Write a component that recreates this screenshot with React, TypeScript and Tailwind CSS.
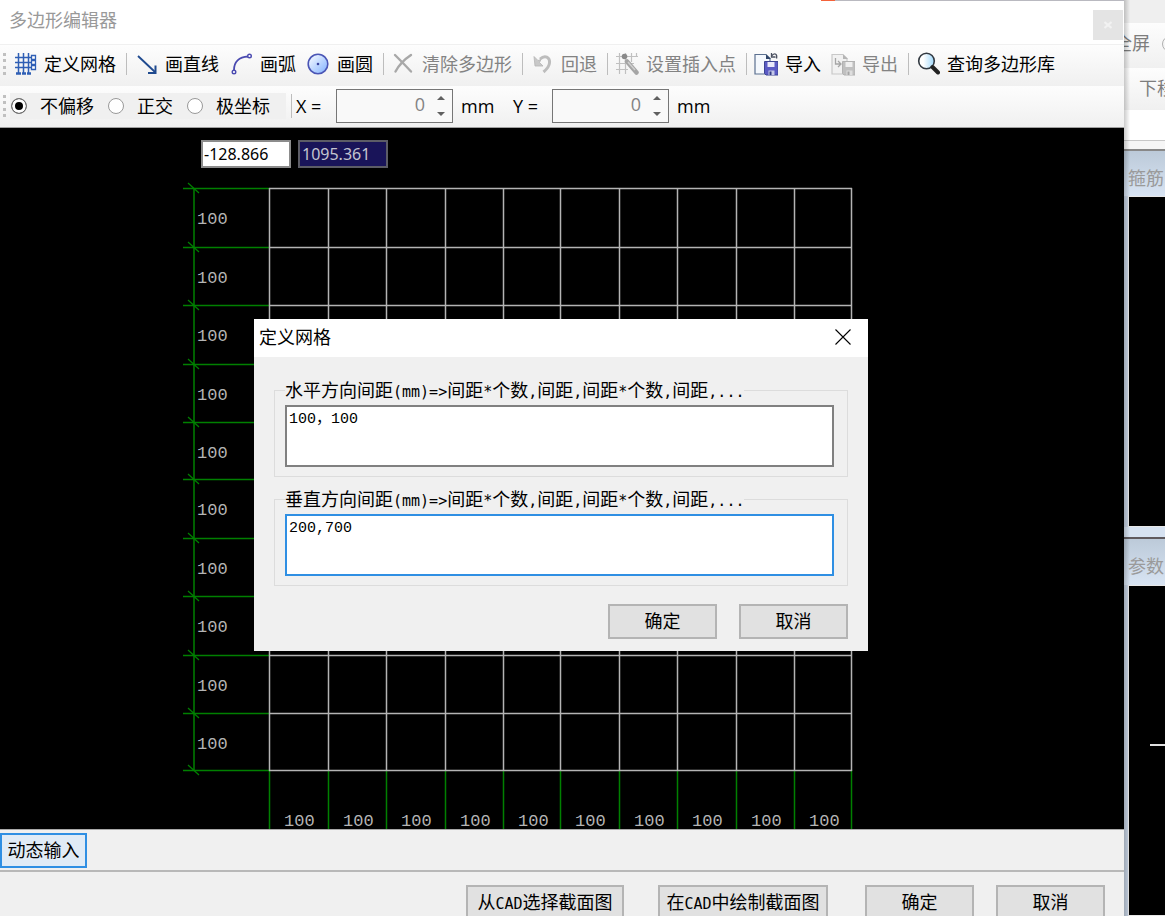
import { useState } from 'react';
import type { ReactNode } from 'react';

const GRID_LEFT = 269;
const GRID_TOP = 60;

/* Distance of every grid line from the grid's corner */
const lines = [0, 59, 117, 176, 234, 291, 350, 408, 467, 525, 582];
const GRID_SIZE = lines[lines.length - 1];

/* Half-width characters sit in 9px cells next to the 18px CJK ones */
const Mixed = ({ text }: { text: string }) => (
  <>
    {text.split(/([\x20-\x7e]+)/).map((part, i) =>
      i % 2 ? (
        <span key={i} className="font-['DejaVu_Sans_Mono',monospace] text-[15px] leading-none">{part}</span>
      ) : (
        part
      )
    )}
  </>
);

/* Icons */
const GridIcon = () => (
  <svg className="w-6 h-6" viewBox="0 0 24 24" fill="none" stroke="#2f5fb5" strokeWidth="1.5">
    <path d="M5.5 1v20M10.5 1v20M15.5 1v20M2 5.5h16M2 10.5h16M2 15.5h16" />
    <path d="M18.5 3.5h4v4h-4zM18.5 8.5h4v4h-4zM18.5 13.5h4v4h-4z" fill="#fff" strokeWidth="1.3" />
    <path d="M3 21.5h5M9 21.5h4M14 21.5h4" strokeWidth="2.6" />
  </svg>
);

const LineIcon = () => (
  <svg className="w-6 h-6" viewBox="0 0 24 24" fill="none" stroke="#1f4a8f">
    <path d="M4 4L21 20" strokeWidth="1.8" />
    <path d="M14 21H21.5V13.5" strokeWidth="2" />
  </svg>
);

const ArcIcon = () => (
  <svg className="w-6 h-6" viewBox="0 0 24 24" fill="none" stroke="#4a4ab0" strokeWidth="1.8">
    <path d="M5 18C5 10 10 5 19 4.5" />
    <circle cx="5" cy="20" r="1.8" fill="#fff" strokeWidth="1.4" />
    <circle cx="20.5" cy="4" r="1.8" fill="#fff" strokeWidth="1.4" />
  </svg>
);

const CircleIcon = () => (
  <svg className="w-6 h-6" viewBox="0 0 24 24">
    <defs>
      <linearGradient id="disc" x1="0" y1="0" x2="1" y2="1">
        <stop offset="0" stopColor="#ffffff" />
        <stop offset="1" stopColor="#7fb0ff" />
      </linearGradient>
    </defs>
    <circle cx="12" cy="12" r="9.8" fill="url(#disc)" stroke="#4a55b5" strokeWidth="1.6" />
    <circle cx="12" cy="12" r="1.3" fill="#3a45a0" />
  </svg>
);

const ClearIcon = () => (
  <svg className="w-6 h-6" viewBox="0 0 24 24" fill="none" stroke="#a8a8a8" strokeLinecap="round">
    <path d="M4 3C9 8 14 13 20 19.5" strokeWidth="2.4" />
    <path d="M20 3C14 7 8 13 4.5 19.5" strokeWidth="2.4" />
  </svg>
);

const UndoIcon = () => (
  <svg className="w-6 h-6" viewBox="0 0 24 24" fill="none" stroke="#bdbdbd">
    <path d="M10 7C15 2.5 20 5 19.5 11C19.2 15 17 17 13.5 20" strokeWidth="3" />
    <path d="M4 4.5L5 14H13L9.5 10.5L11 7.5L8 8.5z" fill="#c8c8c8" stroke="#b5b5b5" strokeWidth="0.8" />
  </svg>
);

const InsertPointIcon = () => (
  <svg className="w-6 h-6" viewBox="0 0 24 24" fill="none">
    <path d="M4.5 1v21M10.5 1v21M16.5 1v9M21.5 1v4M1 4.5h22M1 11.5h18M1 17.5h12" stroke="#c0c0c0" strokeWidth="1.2" />
    <circle cx="9.5" cy="4.5" r="2.8" fill="#8a8a8a" />
    <path d="M12 9.5L21.5 20.5" stroke="#a5a5a5" strokeWidth="4.5" strokeLinecap="round" />
    <path d="M13 10L20 18" stroke="#d0d0d0" strokeWidth="1.5" />
  </svg>
);

const ImportIcon = () => (
  <svg className="w-6 h-6" viewBox="0 0 24 24" fill="none">
    <path d="M1 2.5h11l4 4V22H1z" fill="#f4f8fd" stroke="#5b7090" strokeWidth="1.2" />
    <path d="M12 2.5v4.5h5z" fill="#2f4468" />
    <path d="M10.5 9.5H24V23H12l-1.5-1.5z" fill="#5a5ac4" stroke="#3c4494" />
    <path d="M13.5 10h7v5h-7z" fill="#e8e8fa" />
    <path d="M14.5 18.5h6V23h-6z" fill="#c4c8e8" />
    <path d="M15.5 19.5h2V23h-2z" fill="#333c85" />
    <path d="M18 3.5C21 0.5 23.5 2 22.5 6.5M17.5 1v4h4" stroke="#4a5060" strokeWidth="1.3" />
  </svg>
);

const ExportIcon = () => (
  <svg className="w-6 h-6" viewBox="0 0 24 24" fill="none">
    <path d="M1 2.5h11l4 4V22H1z" fill="#f1f1f1" stroke="#c8c8c8" strokeWidth="1.2" />
    <path d="M12 2.5v4.5h5z" fill="#b5b5b5" />
    <path d="M11.5 9.5H24V23H13l-1.5-1.5z" fill="#c0c0c0" stroke="#b2b2b2" />
    <path d="M14.5 10h7v5h-7z" fill="#efefef" />
    <path d="M15.5 18.5h6V23h-6z" fill="#dedede" />
    <path d="M16.5 19.5h2V23h-2z" fill="#a5a5a5" />
    <path d="M4.5 6v6h5M7 9l3 3-3 3" stroke="#a5a5a5" strokeWidth="1.3" />
  </svg>
);

const SearchIcon = () => (
  <svg className="w-6 h-6" viewBox="0 0 24 24" fill="none">
    <defs>
      <linearGradient id="lens" x1="0" y1="0" x2="1" y2="0">
        <stop offset="0.3" stopColor="#ffffff" />
        <stop offset="1" stopColor="#9fd8fb" />
      </linearGradient>
    </defs>
    <circle cx="10.5" cy="9" r="7.8" fill="url(#lens)" stroke="#333a42" strokeWidth="1.6" />
    <path d="M16.5 15L22 20.5" stroke="#222" strokeWidth="4" strokeLinecap="round" />
  </svg>
);

const Grip = () => (
  <div className="w-[3px] h-[22px] flex flex-col justify-between shrink-0" aria-hidden="true">
    {[0, 1, 2, 3].map((i) => (
      <span key={i} className="w-[3px] h-[3px] bg-[#c0c0c0]" />
    ))}
  </div>
);

const Separator = () => <div className="w-px h-[22px] bg-[#bdbdbd] mr-[7px] shrink-0" />;

type ToolProps = { icon: ReactNode; label: string; disabled?: boolean };

const Tool = ({ icon, label, disabled }: ToolProps) => (
  <button type="button" disabled={disabled} className="flex items-center gap-[7px] mr-[10px] shrink-0 whitespace-nowrap text-black disabled:text-[#838383]">
    {icon}
    <span>{label}</span>
  </button>
);

const NumberField = ({ id }: { id: string }) => {
  const [value, setValue] = useState(0);
  return (
    <div className="flex w-[117px] h-[34px] border border-[#767676] bg-[#f9f9f9] shrink-0">
      <input
        id={id}
        value={value}
        onChange={(e) => setValue(Number(e.target.value) || 0)}
        className="min-w-0 flex-1 bg-transparent text-right pr-[5px] pb-1 outline-none text-[#838383]"
      />
      <div className="w-[22px] flex flex-col">
        <button type="button" aria-label="增加" onClick={() => setValue(value + 1)} className="flex-1 flex items-center justify-center">
          <svg className="w-2 h-1" viewBox="0 0 8 4"><path d="M0 4L4 0L8 4z" fill="#606060" /></svg>
        </button>
        <button type="button" aria-label="减少" onClick={() => setValue(value - 1)} className="flex-1 flex items-center justify-center">
          <svg className="w-2 h-1" viewBox="0 0 8 4"><path d="M0 0L4 4L8 0z" fill="#606060" /></svg>
        </button>
      </div>
    </div>
  );
};

const PushButton = ({ label, width }: { label: string; width: string }) => (
  <button type="button" className={`${width} h-[35px] pb-[2px] shrink-0 whitespace-nowrap border-2 border-[#b4b4b4] bg-[#e1e1e1] leading-6`}>
    <Mixed text={label} />
  </button>
);

const Drawing = () => (
  <svg className="absolute inset-0 w-full h-full" fill="none">
    <g stroke="#008000" strokeWidth="1.5">
      <path d={`M194 ${GRID_TOP}V${GRID_TOP + GRID_SIZE}`} />
      {lines.map((d) => (
        <g key={d}>
          <path d={`M183 ${GRID_TOP + d + 0.5}H${GRID_LEFT}`} />
          <path d={`M188 ${GRID_TOP + d - 5}L199 ${GRID_TOP + d + 5}`} strokeWidth="1.2" />
          <path d={`M${GRID_LEFT + d + 0.5} ${GRID_TOP + GRID_SIZE}v200`} />
        </g>
      ))}
    </g>
    <g stroke="#b4b4b4" strokeWidth="1.5">
      {lines.map((d) => (
        <g key={d}>
          <path d={`M${GRID_LEFT} ${GRID_TOP + d + 0.5}h${GRID_SIZE + 1}`} />
          <path d={`M${GRID_LEFT + d + 0.5} ${GRID_TOP}v${GRID_SIZE + 1}`} />
        </g>
      ))}
    </g>
    <g className="font-['Liberation_Mono',monospace] text-[17px]" fill="#b4b4b4">
      {lines.slice(0, -1).map((d) => (
        <g key={d}>
          <text x="197" y={GRID_TOP + d + 36}>100</text>
          <text x={GRID_LEFT + d + 15} y={GRID_TOP + GRID_SIZE + 56}>100</text>
        </g>
      ))}
    </g>
  </svg>
);

type SpacingProps = { id: string; label: string; defaultValue: string; border: string };

const SpacingField = ({ id, label, defaultValue, border }: SpacingProps) => (
  <fieldset className="border border-[#dcdcdc] pl-[10px] pr-[13px] pb-[9px]">
    <legend className="h-6 leading-6 whitespace-nowrap">
      <label htmlFor={id}><Mixed text={label} /></label>
    </legend>
    <textarea
      id={id}
      defaultValue={defaultValue}
      className={`block w-full h-[62px] mt-[3px] resize-none bg-white border-2 ${border} px-[2px] pt-px pb-0 outline-none font-['Liberation_Mono','Noto_Sans_CJK_SC',monospace] text-[15px] leading-6`}
    />
  </fieldset>
);

const GridDialog = () => (
  <div role="dialog" aria-label="定义网格" className="absolute left-[254px] top-[191px] w-[614px] bg-[#f0f0f0]">
    <div className="h-[38px] bg-white flex items-center justify-between pl-[5px] pr-[17px] pb-[2px]">
      <h2>定义网格</h2>
      <button type="button" aria-label="关闭">
        <svg className="w-4 h-4" viewBox="0 0 16 16" stroke="#000" strokeWidth="1.1"><path d="M0.5 0.5L15.5 15.5M15.5 0.5L0.5 15.5" /></svg>
      </button>
    </div>
    <div className="px-5 pt-[21px] pb-3">
      <div className="flex flex-col gap-[10px]">
        <SpacingField id="horizontal" label="水平方向间距(mm)=>间距*个数,间距,间距*个数,间距,..." defaultValue="100，100" border="border-[#808080]" />
        <SpacingField id="vertical" label="垂直方向间距(mm)=>间距*个数,间距,间距*个数,间距,..." defaultValue="200,700" border="border-[#2f8fe3]" />
      </div>
      <div className="flex justify-end gap-[22px] mt-[18px]">
        <PushButton label="确定" width="w-[109px]" />
        <PushButton label="取消" width="w-[109px]" />
      </div>
    </div>
  </div>
);

/* Main application, partly hidden behind the editor window */
const Background = () => (
  <aside className="relative w-[41px] shrink-0 flex flex-col overflow-hidden whitespace-nowrap bg-[#c6d2e3] text-[#7d7d7d]">
    <div className="h-[23px] bg-[#efefef] shrink-0" />
    <div className="h-[45px] bg-linear-to-b from-[#fdfdfd] to-[#f0f0f0] shrink-0 flex items-center gap-3">
      <span className="-ml-[10px] pb-[6px]">全屏</span>
      <span className="w-4 h-4 mb-1 shrink-0 rounded-full border border-[#b0b0b0]" />
    </div>
    <div className="h-[42px] bg-linear-to-b from-[#fdfdfd] to-[#f0f0f0] shrink-0 flex items-center pl-[15px] pb-[2px]">下移</div>
    <div className="h-[31px] bg-white shrink-0 border-b border-[#c8c8c8]" />
    <div className="h-[10px] bg-[#f6f6f6] shrink-0 border-b-2 border-[#888]" />
    <div className="h-[45px] bg-linear-to-b from-[#bccad9] to-[#d8e4f3] shrink-0 flex items-center pl-1 pt-2 text-[#9a9a9a]">箍筋</div>
    <div className="h-[331px] ml-1 bg-black shrink-0 border-l border-y border-[#e8e8e8]" />
    <div className="h-[12px] bg-[#d6e2f1] shrink-0 border-b-2 border-[#5f5a5e]" />
    <div className="h-[46px] bg-linear-to-b from-[#bccad9] to-[#d8e4f3] shrink-0 flex items-center pl-1 pt-2 text-[#9a9a9a]">参数</div>
    <div className="flex-1 ml-1 bg-black border-l border-y border-[#e8e8e8]">
      <div className="h-[2px] mt-[158px] ml-[21px] bg-[#e0e0e0]" />
    </div>
    <div className="absolute inset-y-0 left-0 w-[6px] bg-linear-to-r from-black/20 to-transparent" />
  </aside>
);

const App = () => {
  const [offset, setOffset] = useState('不偏移');

  return (
    <div className="h-screen flex overflow-hidden bg-[#f0f0f0] text-black text-[18px] leading-6 font-['Open_Sans','Noto_Sans_CJK_SC',sans-serif]">
      <main className="relative flex-1 min-w-0 flex flex-col">
        <div className="absolute top-0 right-0 w-[303px] h-px bg-[#b9b9c0]">
          <div className="w-[14px] h-px bg-[#f4623a]" />
        </div>

        {/* Title bar */}
        <header className="h-[45px] shrink-0 bg-white border-b border-[#f0f0f0] flex justify-between pl-[9px]">
          <h1 className="pt-2 text-[#999]">多边形编辑器</h1>
          <button type="button" aria-label="关闭" className="w-[30px] h-[30px] mt-[10px] mr-px bg-[#e4e4e4] flex items-center justify-center">
            <svg className="w-2 h-2" viewBox="0 0 8 8" stroke="#f2f2f2" strokeWidth="2"><path d="M0.5 1L7.5 7M7.5 1L0.5 7" /></svg>
          </button>
        </header>

        {/* Toolbars */}
        <div role="toolbar" className="h-[41px] shrink-0 overflow-hidden flex items-center pl-[3px] pb-[3px] bg-linear-to-b from-[#fdfdfd] to-[#f0f0f0]">
          <Grip />
          <div className="flex items-center pl-[7px]">
            <Tool icon={<GridIcon />} label="定义网格" />
            <Separator />
            <Tool icon={<LineIcon />} label="画直线" />
            <Tool icon={<ArcIcon />} label="画弧" />
            <Tool icon={<CircleIcon />} label="画圆" />
            <Separator />
            <Tool icon={<ClearIcon />} label="清除多边形" disabled />
            <Separator />
            <Tool icon={<UndoIcon />} label="回退" disabled />
            <Separator />
            <Tool icon={<InsertPointIcon />} label="设置插入点" disabled />
            <Separator />
            <Tool icon={<ImportIcon />} label="导入" />
            <Tool icon={<ExportIcon />} label="导出" disabled />
            <Separator />
            <Tool icon={<SearchIcon />} label="查询多边形库" />
          </div>
        </div>
        <div role="toolbar" className="h-[42px] shrink-0 overflow-hidden flex items-center pl-[3px] pb-px bg-linear-to-b from-[#fdfdfd] to-[#f0f0f0] border-b border-[#a0a0a0]">
          <Grip />
          <div className="flex items-center gap-[14px] ml-1 pl-px pr-4 h-[26px] bg-[#f0f0f0] mr-[5px]">
            {['不偏移', '正交', '极坐标'].map((name) => (
              <label key={name} className="flex items-center gap-[13px]">
                <input
                  type="radio"
                  name="offset"
                  checked={offset === name}
                  onChange={() => setOffset(name)}
                  className="appearance-none w-4 h-4 rounded-full border border-[#999] bg-white checked:border-[#777] checked:bg-black checked:shadow-[inset_0_0_0_3px_white]"
                />
                {name}
              </label>
            ))}
          </div>
          <div className="w-px h-6 bg-[#bdbdbd] mr-1" />
          <label htmlFor="offset-x" className="w-10">X =</label>
          <NumberField id="offset-x" />
          <span className="ml-2 w-[52px]">mm</span>
          <label htmlFor="offset-y" className="w-[39px]">Y =</label>
          <NumberField id="offset-y" />
          <span className="ml-2">mm</span>
        </div>

        {/* Canvas */}
        <section className="relative flex-1 min-h-0 bg-black pt-3 pl-[201px]">
          <div className="absolute inset-0 overflow-hidden">
            <Drawing />
          </div>
          <div className="relative flex gap-[7px] font-['Noto_Sans',sans-serif] text-[16px]">
            <input aria-label="X" defaultValue="-128.866" className="w-[90px] h-[28px] border-2 border-[#8c8c8c] bg-white px-px outline-none" />
            <input aria-label="Y" defaultValue="1095.361" className="w-[90px] h-[28px] border-2 border-[#5c5c66] bg-[#191459] text-[#c4c4d0] px-[2px] outline-none" />
          </div>
          <GridDialog />
        </section>

        {/* Status bar */}
        <div className="h-[43px] shrink-0 border-t border-[#a8a8a8] border-b-2 border-b-[#b8b8b8] pt-[3px]">
          <button type="button" className="w-[87px] h-[35px] pb-[2px] border-2 border-[#2f8fe3] bg-[#e0ebf6]">动态输入</button>
        </div>
        <footer className="h-[44px] shrink-0 overflow-hidden flex justify-end gap-[37px] pt-[13px] pr-[19px]">
          <div className="flex gap-[34px]">
            <PushButton label="从CAD选择截面图" width="w-[158px]" />
            <PushButton label="在CAD中绘制截面图" width="w-[170px]" />
          </div>
          <div className="flex gap-[22px]">
            <PushButton label="确定" width="w-[109px]" />
            <PushButton label="取消" width="w-[109px]" />
          </div>
        </footer>
      </main>
      <Background />
    </div>
  );
};

export default App;
